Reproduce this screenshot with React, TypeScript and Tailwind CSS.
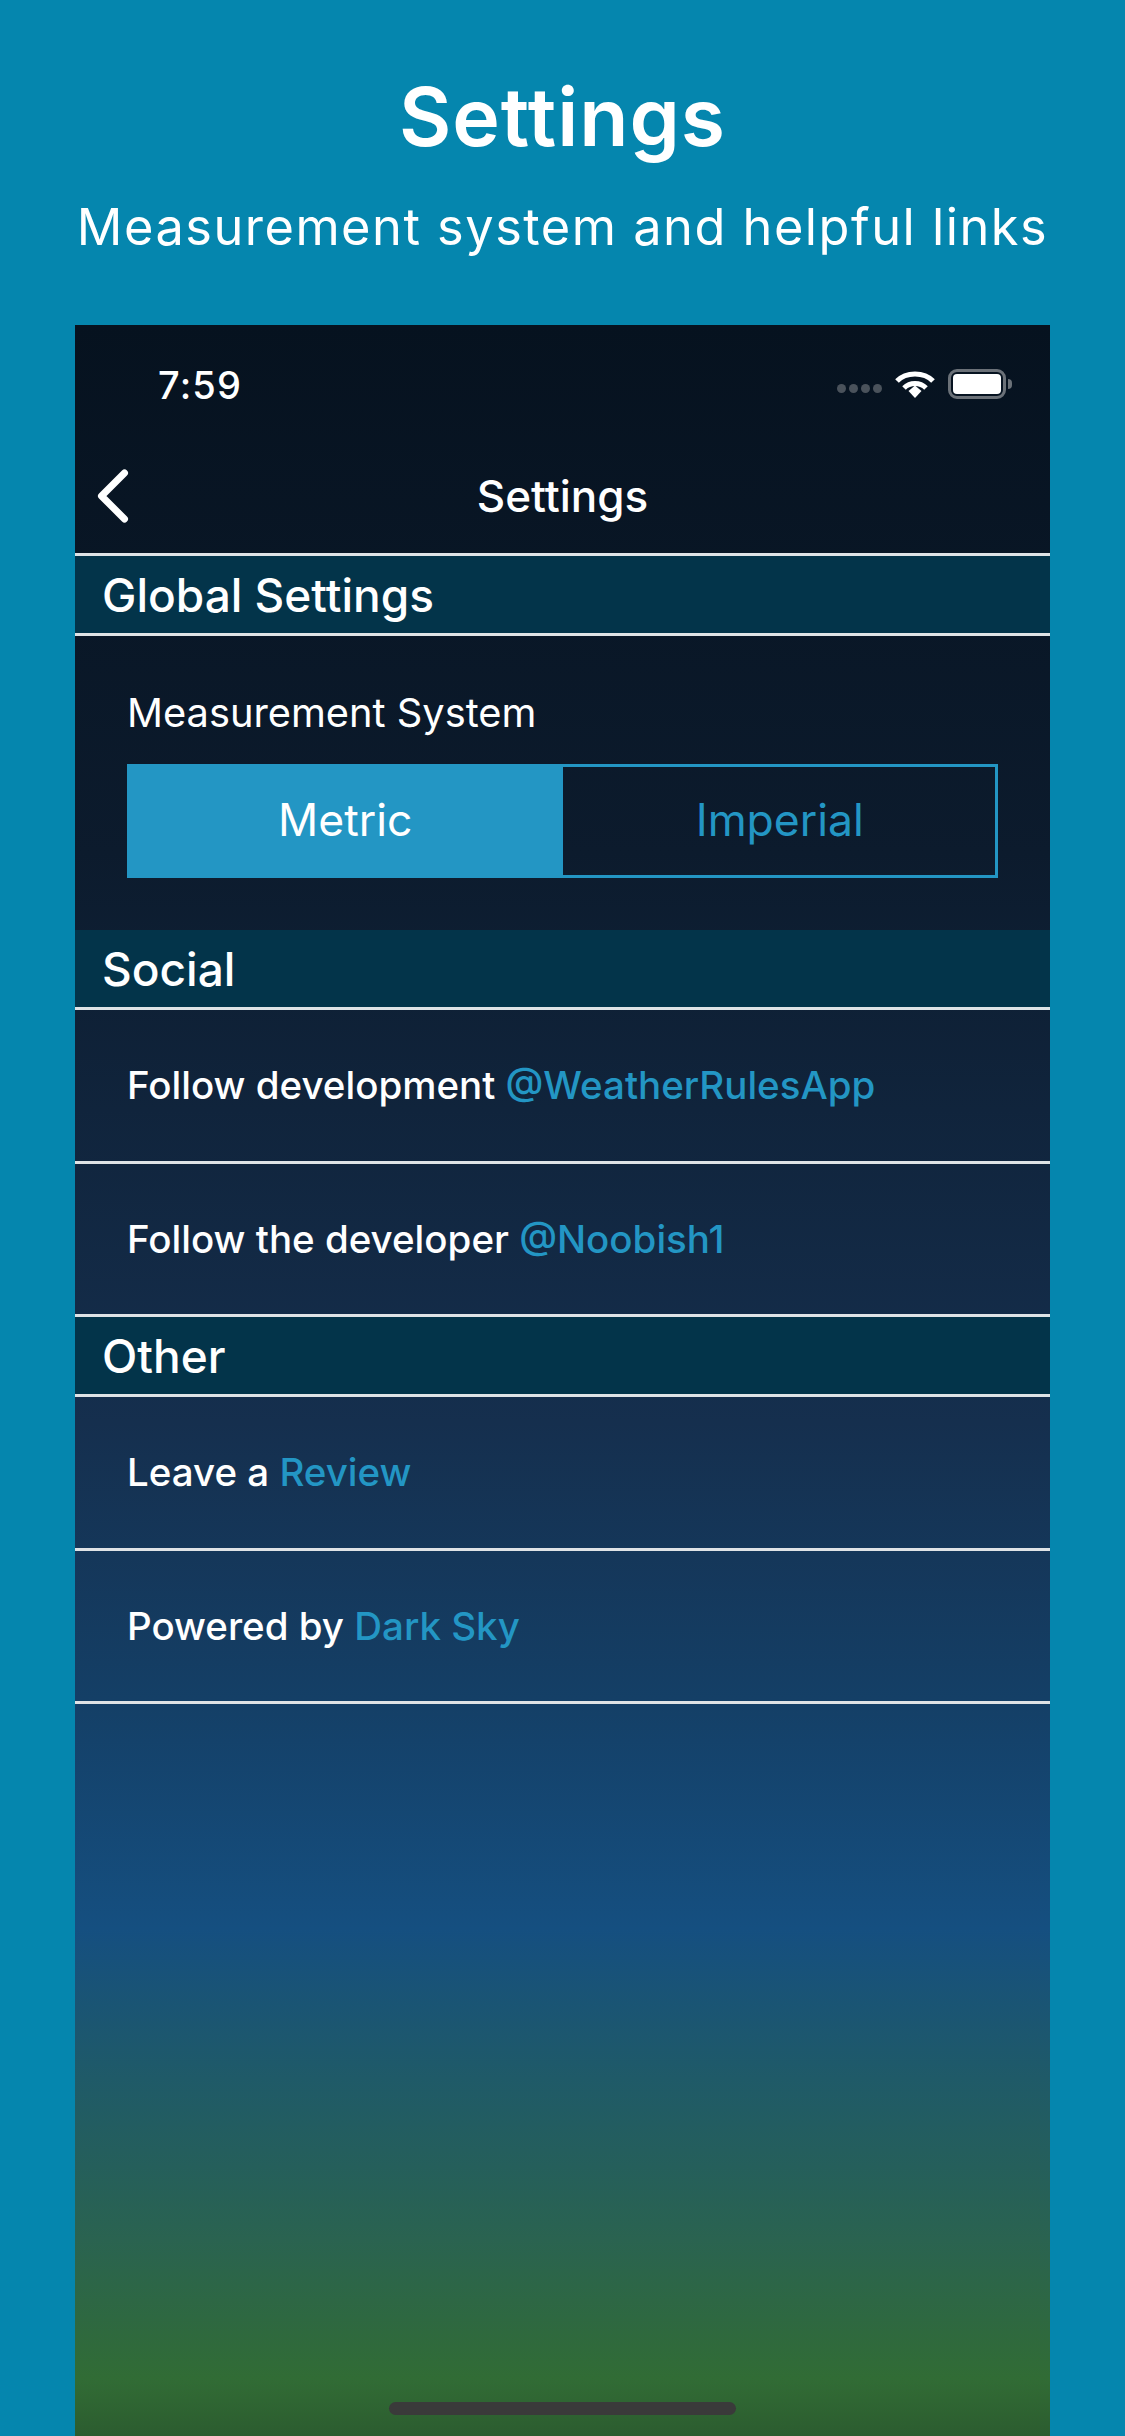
const font = { fontFamily: 'Inter, "Noto Sans", sans-serif' };

function SectionHeader({ title }: { title: string }) {
  return (
    <div className="flex h-[80px] items-center border-b-[3px] border-[#dfe3e6] bg-[#03344a] pl-[27px] text-[46px] font-medium leading-none text-white">
      {title}
    </div>
  );
}

function LinkRow({ text, link }: { text: string; link: string }) {
  return (
    <div className="flex h-[153.5px] items-center border-b-[3px] border-[#dfe3e6] pl-[52px] text-[38.5px] font-medium leading-none text-white whitespace-pre">
      {text} <span className="text-[#2396c4]">{link}</span>
    </div>
  );
}

function StatusIcons() {
  return (
    <div className="flex items-center">
      <div className="mt-[9px] flex gap-[3px]">
        <div className="h-[9px] w-[9px] rounded-full bg-[#4a525b]" />
        <div className="h-[9px] w-[9px] rounded-full bg-[#4a525b]" />
        <div className="h-[9px] w-[9px] rounded-full bg-[#4a525b]" />
        <div className="h-[9px] w-[9px] rounded-full bg-[#4a525b]" />
      </div>
      <svg className="ml-[13px]" width="40" height="29" viewBox="0 0 40 29" fill="none">
        <path d="M2 11 C11 1.5 29 1.5 38 11" stroke="white" strokeWidth="5" />
        <path d="M9 18 C15 12 25 12 31 18" stroke="white" strokeWidth="5" />
        <path d="M13.5 22 L20 16.5 L26.5 22 L20 29 Z" fill="white" transform="translate(0,-1)" />
      </svg>
      <div className="ml-[13px] flex items-center">
        <div className="flex h-[30px] w-[58px] items-center justify-center rounded-[9px] border-[3px] border-[#6b7178]">
          <div className="h-[20px] w-[48px] rounded-[4px] bg-white" />
        </div>
        <div className="ml-[2px] h-[10px] w-[4px] rounded-r-full bg-[#6b7178]" />
      </div>
    </div>
  );
}

export default function App() {
  return (
    <div className="flex h-[2436px] w-[1125px] flex-col overflow-hidden bg-[#0586ae] text-white" style={font}>
      <div className="flex h-[325px] flex-col items-center">
        <div className="mt-[72px] text-[80.5px] font-semibold leading-[90px] tracking-[1px]">Settings</div>
        <div className="mt-[35px] text-[50.5px] font-normal leading-[60px] tracking-[1.5px]">Measurement system and helpful links</div>
      </div>

      <div className="mx-[75px] flex flex-1 flex-col bg-[linear-gradient(180deg,#06121f_0%,#0c1b2d_25%,#152f4e_52%,#143f66_65%,#154f80_76%,#1f5a68_83%,#2a6350_90.7%,#316c35_97.3%,#2c5c2f_100%)]">
        <div className="flex h-[118px] items-center justify-between pl-[83px] pr-[38px]">
          <div className="mt-[1px] text-[38px] font-medium leading-none tracking-[1.2px]">7:59</div>
          <StatusIcons />
        </div>

        <div className="relative flex h-[113px] items-center justify-center border-b-[3px] border-[#dfe3e6] pb-[4px] text-[44px] font-medium leading-none">
          <svg className="absolute left-[18px] top-[25px]" width="40" height="56" viewBox="0 0 40 56" fill="none">
            <path d="M31.5 5 L8.5 28 L31.5 51" stroke="white" strokeWidth="7" strokeLinecap="round" strokeLinejoin="round" />
          </svg>
          Settings
        </div>

        <SectionHeader title="Global Settings" />

        <div className="flex h-[294px] flex-col px-[52px] pt-[54px]">
          <div className="text-[39.8px] font-normal leading-[46px]">Measurement System</div>
          <div className="mt-[28px] flex h-[114px] border-[3px] border-[#2396c4] text-[44.5px] leading-none">
            <div className="flex w-1/2 items-center justify-center bg-[#2396c4] pb-[2px] pr-[2px]">Metric</div>
            <div className="flex w-1/2 items-center justify-center pb-[2px] pl-[2px] text-[#2396c4]">Imperial</div>
          </div>
        </div>

        <SectionHeader title="Social" />
        <LinkRow text="Follow development" link="@WeatherRulesApp" />
        <LinkRow text="Follow the developer" link="@Noobish1" />
        <SectionHeader title="Other" />
        <LinkRow text="Leave a" link="Review" />
        <LinkRow text="Powered by" link="Dark Sky" />

        <div className="flex flex-1 items-end justify-center pb-[21px]">
          <div className="h-[13px] w-[347px] rounded-full bg-[#3a3a3a]" />
        </div>
      </div>
    </div>
  );
}
